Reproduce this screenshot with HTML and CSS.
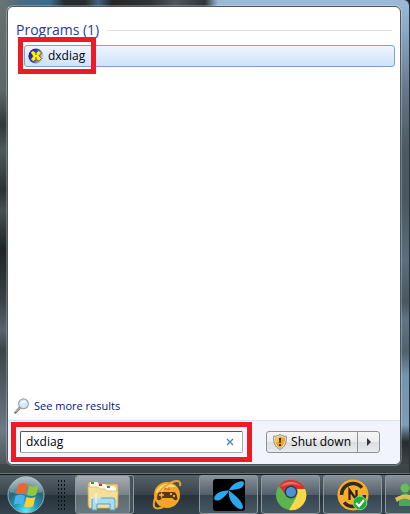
FILE: index.html
```html
<!DOCTYPE html>
<html lang="en">
<head>
    <meta charset="UTF-8">
    <meta name="viewport" content="width=device-width, initial-scale=1.0">
    <title>Start menu</title>
    <link rel="stylesheet" href="styles.css">
</head>
<body>
    <div class="frame">
        <main class="menu">
            <section class="results">
                <h1 class="group-title">Programs (1)</h1>
                <button class="program" type="button">
                    <svg class="icon" viewBox="0 0 16 16" aria-hidden="true">
                        <defs>
                            <linearGradient id="ball" x2="1" y2="0.4">
                                <stop offset="0" stop-color="#0b0ba0"/>
                                <stop offset="0.5" stop-color="#3038b8"/>
                                <stop offset="1" stop-color="#c8cce0"/>
                            </linearGradient>
                        </defs>
                        <circle cx="8" cy="8" r="7.6" fill="url(#ball)"/>
                        <path d="M2.5 4.5 5 2.5 8 4.8 10.8 2.5 13.5 4.8 11 7.8 13.6 10.6 11 13.2 8.2 11.2 5.2 13.6 2.6 11.2 5 8.2z" fill="#fff200" stroke="#24245c" stroke-width=".6"/>
                        <path d="M8 5v2M8 9v2" stroke="#24245c" stroke-width=".8"/>
                    </svg>
                    <span>dxdiag</span>
                </button>
                <a class="more" href="#">
                    <svg class="icon" viewBox="0 0 16 16" aria-hidden="true">
                        <path d="M1.5 14.5 6 9.5" stroke="#77797b" stroke-width="2.6" stroke-linecap="round"/>
                        <path d="M1.5 14.2 5.6 9.7" stroke="#c9cbcc" stroke-width="1"/>
                        <circle cx="9.5" cy="5.8" r="4.9" fill="#d3ecfa" stroke="#9aa3aa" stroke-width="1.2"/>
                        <path d="M6.4 6a3.2 3.2 0 0 1 5.6-2.2z" fill="#fff"/>
                    </svg>
                    <span>See more results</span>
                </a>
            </section>
            <footer class="bottom">
                <div class="search-mark">
                    <form class="search">
                        <input type="text" value="dxdiag" aria-label="Search programs and files">
                        <button type="reset" aria-label="Clear search">
                            <svg viewBox="0 0 8 8" aria-hidden="true"><path d="M1 1l6 6M7 1 1 7" stroke="#4285b8" stroke-width="1.3"/></svg>
                        </button>
                    </form>
                </div>
                <div class="power">
                    <button class="shutdown" type="button">
                        <svg class="shield" viewBox="0 0 14 16" aria-hidden="true">
                            <path d="M7 .5C9 1.8 11 2.3 13.3 2.3 13.8 8.5 12 13 7 15.5 2 13 .2 8.5.7 2.3 3 2.3 5 1.8 7 .5z" fill="#e9e9e9" stroke="#858585"/>
                            <path d="M7 2C8.5 3 10.2 3.5 12 3.5 12.2 8 11 12 7 14.2 3 12 1.8 8 2 3.5 3.8 3.5 5.5 3 7 2z" fill="#f5a51d"/>
                            <path d="M7 2C5.5 3 3.8 3.5 2 3.5 1.9 5 2 6.5 2.3 8H7z" fill="#ffc34d"/>
                            <path d="M6 4h2l-.4 5H6.4zM6.1 10h1.8v2H6.1z" fill="#222"/>
                        </svg>
                        <span>Shut down</span>
                    </button>
                    <button class="arrow" type="button" aria-label="Shut down options">
                        <svg viewBox="0 0 4 8" aria-hidden="true"><path d="M0 0l4 4-4 4z" fill="#333"/></svg>
                    </button>
                </div>
            </footer>
        </main>
    </div>
    <nav class="taskbar">
        <button class="start" type="button" aria-label="Start">
            <svg viewBox="0 0 38 38" aria-hidden="true">
                <defs>
                    <radialGradient id="orb" cx=".5" cy=".95" r=".9">
                        <stop offset="0" stop-color="#5cf0f8"/>
                        <stop offset=".35" stop-color="#1e9cbc"/>
                        <stop offset=".7" stop-color="#2d6274"/>
                        <stop offset="1" stop-color="#8fa4aa"/>
                    </radialGradient>
                </defs>
                <circle cx="19" cy="19" r="18" fill="url(#orb)" stroke="#8dafb9"/>
                <path d="M3 16a16 16 0 0 1 32 0q-16 5-32 0z" fill="#fff" opacity=".25"/>
                <path d="M11.5 8.5q4.5-2.5 9 0L18.500 18q-4.500-2-9.500 0z" fill="#f0642b"/>
                <path d="M22 9.500q4.500 2 9.500 0L29 19q-4.500 2-9 0z" fill="#90c83e"/>
                <path d="M8.500 20q4.500-2.500 9.500 0l-2.200 9q-4.500-2.500-9.300 0z" fill="#48b2ed"/>
                <path d="M19.500 21q4.500 2 9 0L26 30.500q-4.500 2-9 0z" fill="#fccf35"/>
            </svg>
        </button>
        <span class="grip"></span>
        <span class="stack">
            <button class="task" type="button" aria-label="Windows Explorer">
                <svg viewBox="0 0 32 32" aria-hidden="true">
                    <path d="M1 5q0-2 2-2h7l2 2h18q1 0 1 2v20H1z" fill="#e6cf7c" stroke="#b99b48" stroke-width=".7"/>
                    <path d="M3 3h7l2 2v4H3z" fill="#fffbe8"/><path d="M11 5h7l2 2v4h-9z" fill="#fffbe8"/><path d="M19 7h8l2 2v3H19z" fill="#fffbe8"/>
                    <path d="M4 3h3v2H4z" fill="#19a82b"/><path d="M12 5h3v2h-3z" fill="#dc2a27"/><path d="M20 7h3v2h-3z" fill="#2483d2"/>
                    <path d="M1 8h10l2 2h5l2 2h11l-1 17H2z" fill="#f3e09a" stroke="#d7b95e" stroke-width=".7"/>
                    <path d="M5 31V21q0-2 2-2h19q2 0 2 2v10h-5v-6H10v6z" fill="#a7dcf1" stroke="#569fc1"/>
                    <path d="M9 14v10M4 19h10" stroke="#fff"/>
                </svg>
            </button>
        </span>
        <button class="task plain" type="button" aria-label="Games">
            <svg viewBox="0 0 32 32" aria-hidden="true">
                <circle cx="16" cy="16" r="13" fill="#f6a623"/>
                <path d="M5 12q9-12 20-4-12-1-18 9z" fill="#ffdc79"/>
                <path d="M12 28C-1 34 1 20 10 11S31-2 29 7" fill="none" stroke="#eca32b" stroke-width="2"/>
                <path d="M9 13h14q3 1 3.5 7-2 3-5-1H11q-3 4-5 1Q6 14 9 13z" fill="#5c3716"/>
                <path d="M8 16h5M10.5 13.5v5" stroke="#f7b53f" stroke-width="1.4"/>
                <circle cx="20" cy="15" r="1" fill="#ffd278"/><circle cx="23" cy="17" r="1" fill="#ffd278"/>
                <path d="M14 11V9l4 2V8" fill="none" stroke="#b5751f"/>
            </svg>
        </button>
        <button class="task" type="button" aria-label="Telenor">
            <svg viewBox="0 0 32 32" aria-hidden="true">
                <rect width="32" height="32" rx="3" fill="#000"/>
                <g fill="#28a8ee">
                    <path d="M16 11Q19 5 25 3C28 2 31 2 31 4 31 9 25 11 16 11z"/>
                    <path d="M16 11.5Q9 11 5 14C2 16 0 19 2 21 5 23 11 20 16 11.500z"/>
                    <path d="M16 11.500Q15 17 18 22C21 27 26 31 29 30 32 28 28 20 16 11.500z"/>
                </g>
            </svg>
        </button>
        <button class="task" type="button" aria-label="Google Chrome">
            <svg viewBox="0 0 32 32" aria-hidden="true">
                <circle cx="16" cy="16" r="15" fill="#5ab551"/>
                <path d="M4 7A15 15 0 0 1 30 10H16a6 6 0 0 0-6 5z" fill="#d8302c"/>
                <path d="M30 10A15 15 0 0 1 14 31l7-12q2-5-2-9z" fill="#f9d84a"/>
                <circle cx="16" cy="13" r="6.5" fill="#333c42"/><circle cx="16" cy="13" r="5" fill="#4b92dc"/>
                <path d="M5 8Q14-2 27 7q-11-4-22 1z" fill="#fff" opacity=".3"/>
            </svg>
        </button>
        <button class="task" type="button" aria-label="Norton">
            <svg viewBox="0 0 32 32" aria-hidden="true">
                <circle cx="16" cy="16" r="15.5" fill="#f9ad2c"/>
                <circle cx="16" cy="16" r="11.5" fill="none" stroke="#352b20" stroke-width="3.5" stroke-dasharray="28 8"/>
                <path d="M12.5 21V11l7 10V11" fill="none" stroke="#2b2118" stroke-width="2.2"/>
                <circle cx="23" cy="24" r="6.8" fill="#20ad36" stroke="#80dc81"/>
                <path d="m19 24 3 3 5-6" fill="none" stroke="#fff" stroke-width="2.2"/>
            </svg>
        </button>
        <button class="task last" type="button" aria-label="Messenger">
            <svg viewBox="0 0 16 32" aria-hidden="true">
                <circle cx="11" cy="9" r="4.5" fill="#66bd58"/>
                <path d="M5 27Q4 15 11 14q4 0 5 4v9z" fill="#4ba657"/>
                <path d="M1 19q8-5 15-3v5Q9 17 3 23z" fill="#e4bb55"/>
            </svg>
        </button>
    </nav>
</body>
</html>
```

FILE: styles.css
```css
*,
*::after {
    box-sizing: border-box;
}
body {
    margin: 0;
    min-height: 100vh;
    display: flex;
    flex-direction: column;
    background: #20272b;
    color: #000;
    font: 12px/16px "Open Sans", "Noto Sans", sans-serif;
}
button {
    padding: 0;
    border: 0;
    background: none;
    color: inherit;
    font: inherit;
}
svg {
    display: block;
}
.icon {
    width: 16px;
    height: 16px;
    flex: none;
}

/* Glass frame around the menu */
.frame {
    flex: 1;
    display: flex;
    padding: 6px 8px 8px 7px;
    border-right: 1px solid #2b3338;
    border-bottom: 1px solid #6b7579;
    border-radius: 0 6px 0 0;
    background:
        linear-gradient(90deg, #6b7673, #4c6982 20px, #3b6c8c 50px, #262b2e 65px, #262b2e 85px, #45627f 98px, #262626 112px, #303234 150px, #50565a 175px, #303538 205px, #9bb8d5 218px) top / 100% 7px no-repeat,
        linear-gradient(#3f494c, #3a4145) bottom / 100% 9px no-repeat,
        linear-gradient(#68726f, #5c6866 90px, #30393a 125px, #4e595b 150px, #2c3334 190px, #454f52 210px, #1f2324 250px, #3a4245 300px, #55636d 330px, #3a4449 350px, #6c7a84 430px, #444e53) left / 8px 100% no-repeat,
        linear-gradient(#9bb8d5, #8ba8c8 30px, #65788b 90px, #4a5963 150px, #485761 200px, #5a6f80 260px, #485660 302px, #5f7688 320px, #4f616e 352px, #7393ae 375px, #7f9cb8 425px, #262b2e 442px, #3a4145 460px);
}
.menu {
    flex: 1;
    display: flex;
    flex-direction: column;
    overflow: hidden;
    border: 1px solid #4a5660;
    border-radius: 6px;
    background: #fff;
    box-shadow: 0 0 0 1px rgba(255, 255, 255, 0.25);
}
.results {
    flex: 1;
    display: flex;
    flex-direction: column;
    padding: 13px 5px 6px 8px;
}
.group-title {
    display: flex;
    align-items: center;
    gap: 8px;
    margin: 0 3px 5px 0;
    color: #1e3c9b;
    font-size: 14px;
    font-weight: normal;
    line-height: 20px;
}
.group-title::after {
    content: "";
    flex: 1;
    height: 1px;
    background: #e2e2e2;
}
.program {
    position: relative;
    display: flex;
    align-items: center;
    gap: 4px;
    height: 22px;
    margin-left: 8px;
    padding-left: 3px;
    border: 1px solid #7da2ce;
    border-radius: 3px;
    background: linear-gradient(#eef5fe, #cfe3fd);
}
/* Red marker drawn over the row */
.program::after {
    content: "";
    position: absolute;
    top: -9px;
    left: -7px;
    width: 78px;
    height: 37px;
    border: 5px solid #ed1c24;
}
.more {
    display: flex;
    align-items: center;
    gap: 4px;
    margin-top: auto;
    margin-left: -2px;
    color: #001478;
    font-size: 11px;
    text-decoration: none;
}

/* Search and power row */
.bottom {
    display: flex;
    align-items: center;
    gap: 14px;
    padding: 1px 20px 2px 3px;
    border-top: 1px solid #d6e2f2;
    background: #f1f4fb;
}
.search-mark {
    flex: 1;
    padding: 4px;
    border: 5px solid #ed1c24;
}
.search {
    display: flex;
    align-items: center;
    height: 22px;
    padding: 0 8px 0 5px;
    border: 1px solid #a4abb4;
    border-top-color: #51565e;
    border-left-color: #51565e;
    border-radius: 2px;
    background: #fff;
}
.search input {
    flex: 1;
    min-width: 0;
    padding: 0;
    border: 0;
    outline: 0;
    background: none;
    font: inherit;
}
.search svg {
    width: 8px;
    height: 8px;
}
.power {
    display: flex;
    height: 22px;
    border: 1px solid #8d9299;
    border-radius: 3px;
    background: linear-gradient(#f6f6f6, #ececee 50%, #dcdde0 51%, #e8e9eb);
}
.shutdown {
    display: flex;
    align-items: center;
    gap: 4px;
    padding: 0 6px;
}
.shield {
    width: 14px;
    height: 16px;
}
.arrow {
    width: 22px;
    padding-left: 9px;
    border-left: 1px solid #8d9299;
}
.arrow svg {
    width: 4px;
    height: 8px;
}

/* Taskbar */
.taskbar {
    display: flex;
    height: 40px;
    padding-left: 7px;
    border-top: 1px solid #12171a;
    background: linear-gradient(#56626b, #38434b 50%, #27323a 51%, #35454f);
}
.taskbar > * {
    flex: none;
}
.start svg {
    width: 38px;
    height: 38px;
}
.grip {
    width: 9px;
    margin: 4px 9px 3px 12px;
    background: radial-gradient(circle, #0c1013 1px, transparent 1px) 0 0 / 3px 4px;
}
.task {
    display: flex;
    align-items: center;
    justify-content: center;
    width: 59px;
    margin-right: 3px;
    border: 1px solid #8c979e;
    border-radius: 3px;
    background: linear-gradient(#87919a, #535f69 50%, #35434e 51%, #475966);
}
.task svg {
    width: 32px;
    height: 32px;
}
.plain {
    border-color: transparent;
    background: none;
}
.stack {
    display: flex;
    width: 59px;
    margin-right: 3px;
    border: 1px solid #8c979e;
    border-radius: 3px;
    background: #46525b;
}
.stack .task {
    width: 54px;
    margin: 0;
    border-width: 0 1px 0 0;
    background: linear-gradient(#a5adb2, #7a848b 50%, #5d6971 51%, #6c7880);
}
.taskbar .last {
    flex: 1;
    justify-content: flex-end;
    margin-right: 0;
    border-right: 0;
    border-radius: 3px 0 0 3px;
}
.last svg {
    width: 16px;
}
```
